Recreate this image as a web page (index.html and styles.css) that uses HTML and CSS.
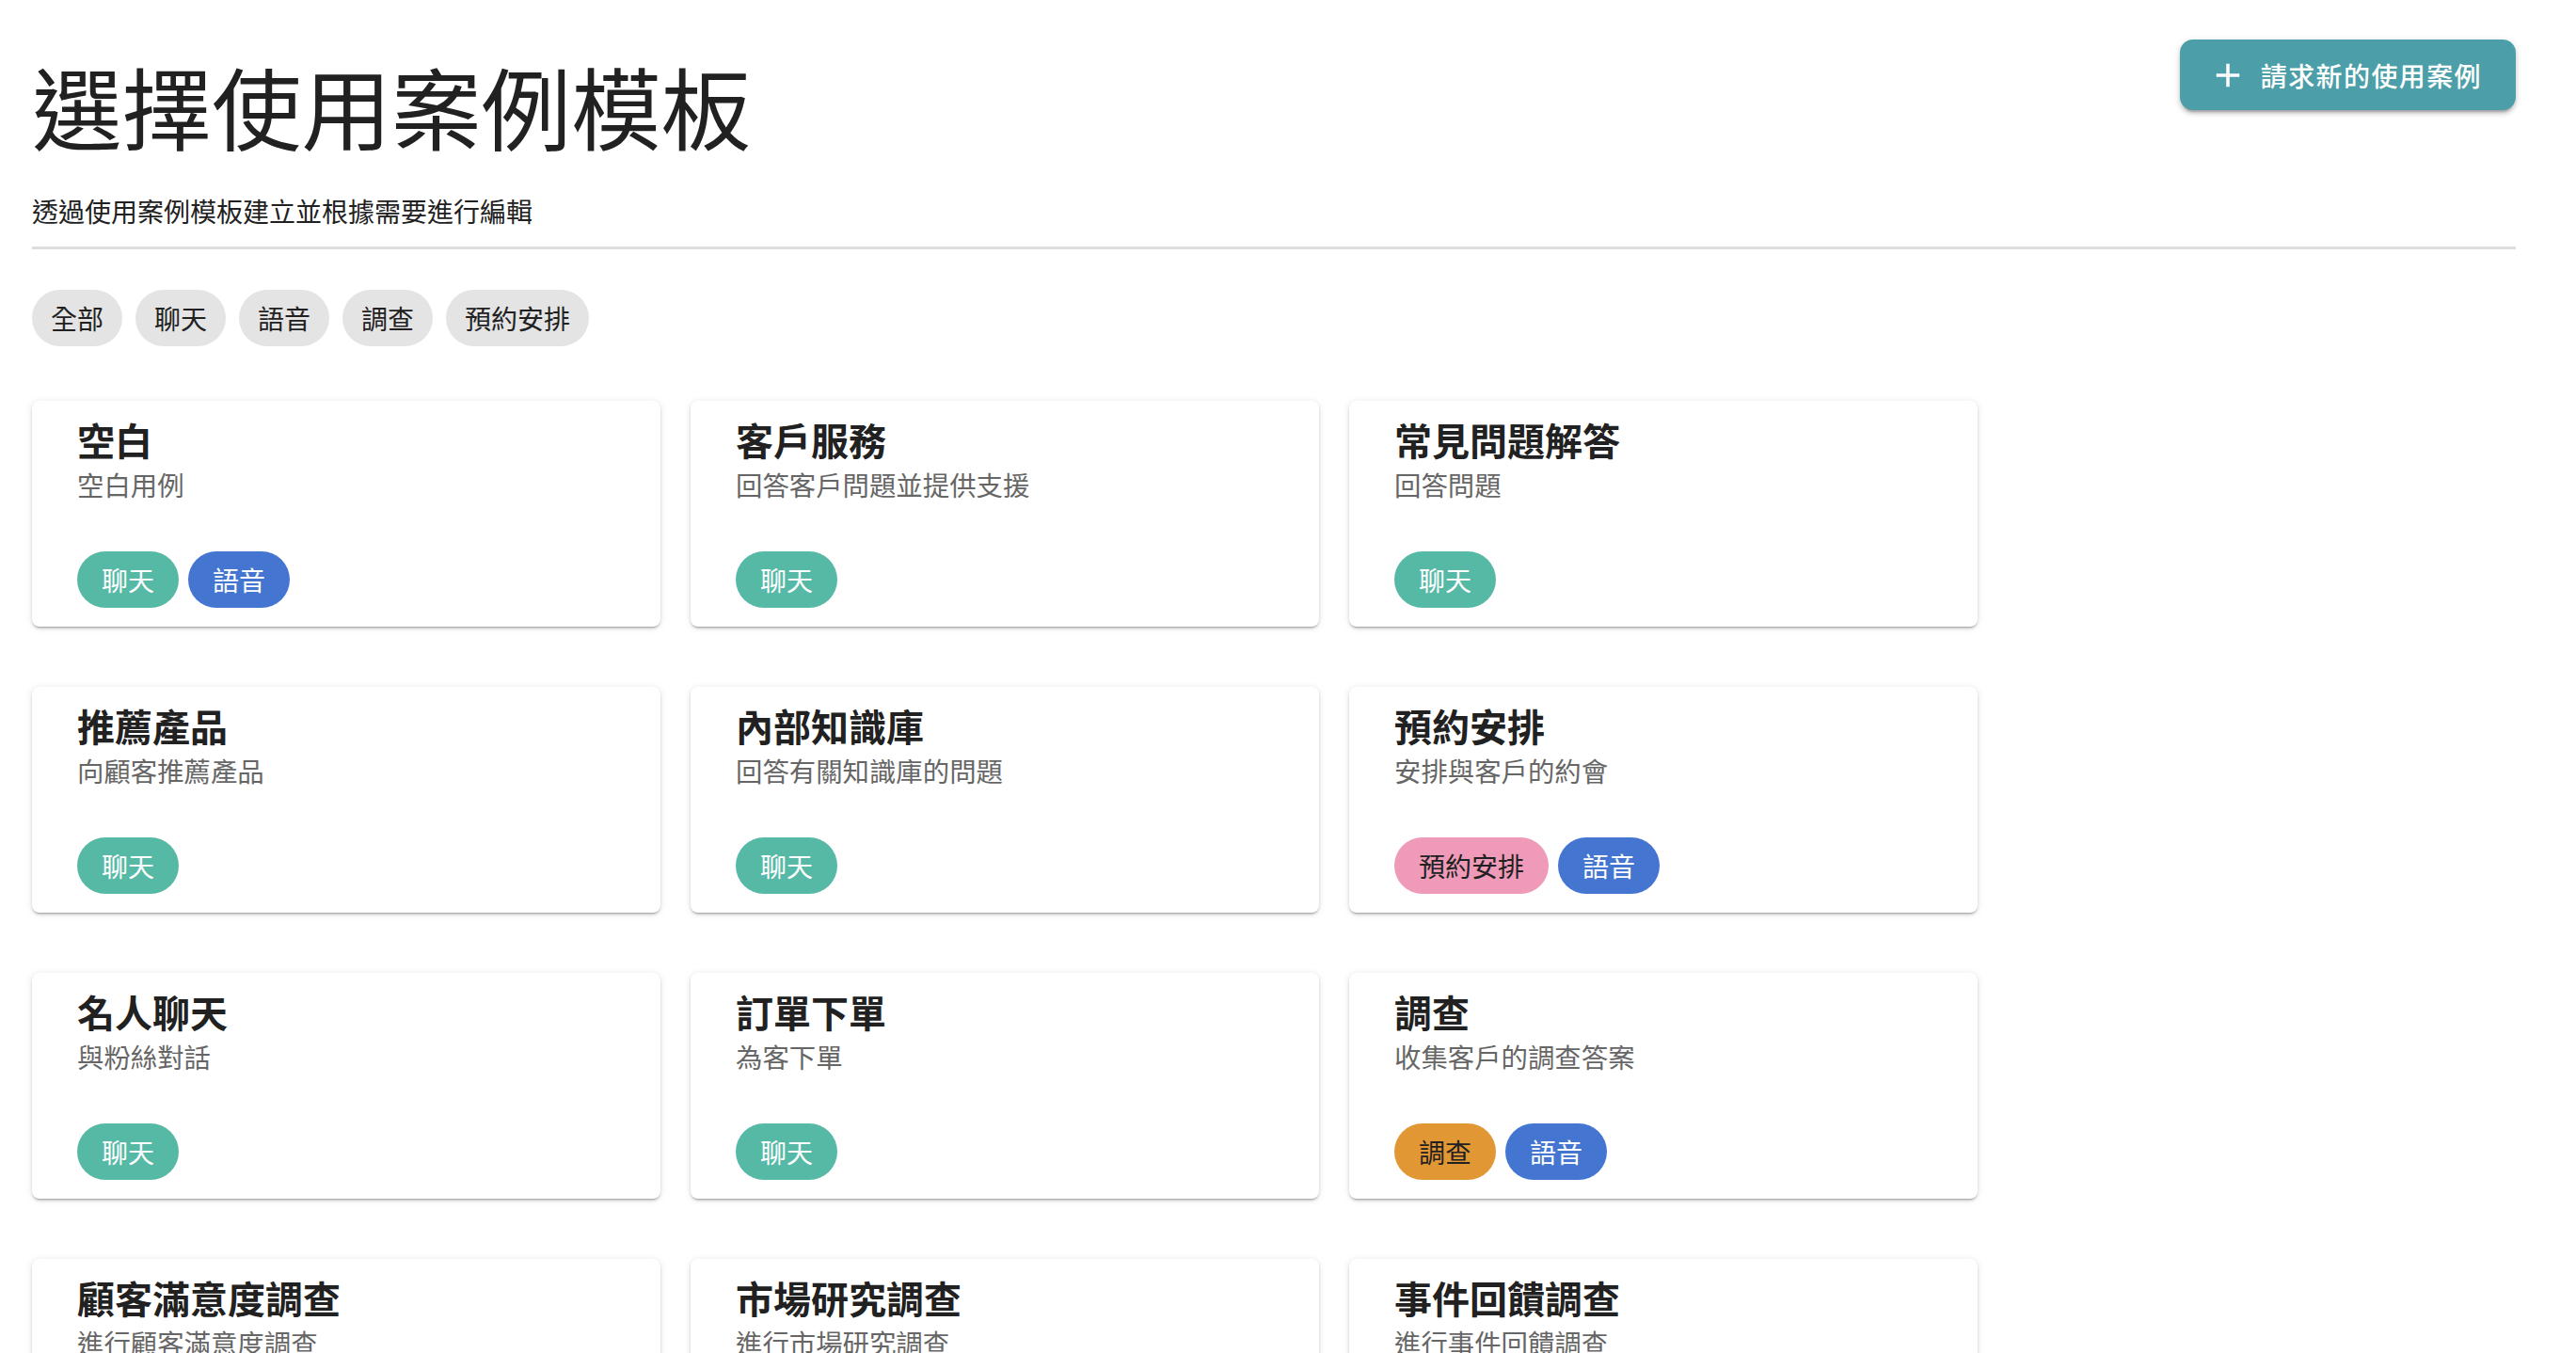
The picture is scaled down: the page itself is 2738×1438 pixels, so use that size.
FILE: index.html
```html
<!DOCTYPE html>
<html lang="zh-Hant">
<head>
<meta charset="utf-8">
<title>選擇使用案例模板</title>
<link rel="stylesheet" href="styles.css">
</head>
<body>
<main class="page">
  <header class="header">
    <div class="header-text">
      <h1 class="title">選擇使用案例模板</h1>
      <p class="subtitle">透過使用案例模板建立並根據需要進行編輯</p>
    </div>
    <button class="request-btn" type="button">
      <svg class="plus" viewBox="0 0 24 24" aria-hidden="true"><path d="M19 13h-6v6h-2v-6H5v-2h6V5h2v6h6v2z"/></svg>
      <span>請求新的使用案例</span>
    </button>
  </header>
  <hr class="divider">
  <nav class="filters">
    <span class="chip">全部</span>
    <span class="chip">聊天</span>
    <span class="chip">語音</span>
    <span class="chip">調查</span>
    <span class="chip">預約安排</span>
  </nav>
  <section class="grid">
    <article class="card">
      <h2 class="card-title">空白</h2>
      <p class="card-desc">空白用例</p>
      <div class="tags"><span class="tag tag-chat">聊天</span><span class="tag tag-voice">語音</span></div>
    </article>
    <article class="card">
      <h2 class="card-title">客戶服務</h2>
      <p class="card-desc">回答客戶問題並提供支援</p>
      <div class="tags"><span class="tag tag-chat">聊天</span></div>
    </article>
    <article class="card">
      <h2 class="card-title">常見問題解答</h2>
      <p class="card-desc">回答問題</p>
      <div class="tags"><span class="tag tag-chat">聊天</span></div>
    </article>
    <article class="card">
      <h2 class="card-title">推薦產品</h2>
      <p class="card-desc">向顧客推薦產品</p>
      <div class="tags"><span class="tag tag-chat">聊天</span></div>
    </article>
    <article class="card">
      <h2 class="card-title">內部知識庫</h2>
      <p class="card-desc">回答有關知識庫的問題</p>
      <div class="tags"><span class="tag tag-chat">聊天</span></div>
    </article>
    <article class="card">
      <h2 class="card-title">預約安排</h2>
      <p class="card-desc">安排與客戶的約會</p>
      <div class="tags"><span class="tag tag-booking">預約安排</span><span class="tag tag-voice">語音</span></div>
    </article>
    <article class="card">
      <h2 class="card-title">名人聊天</h2>
      <p class="card-desc">與粉絲對話</p>
      <div class="tags"><span class="tag tag-chat">聊天</span></div>
    </article>
    <article class="card">
      <h2 class="card-title">訂單下單</h2>
      <p class="card-desc">為客下單</p>
      <div class="tags"><span class="tag tag-chat">聊天</span></div>
    </article>
    <article class="card">
      <h2 class="card-title">調查</h2>
      <p class="card-desc">收集客戶的調查答案</p>
      <div class="tags"><span class="tag tag-survey">調查</span><span class="tag tag-voice">語音</span></div>
    </article>
    <article class="card">
      <h2 class="card-title">顧客滿意度調查</h2>
      <p class="card-desc">進行顧客滿意度調查</p>
      <div class="tags"><span class="tag tag-survey">調查</span><span class="tag tag-voice">語音</span></div>
    </article>
    <article class="card">
      <h2 class="card-title">市場研究調查</h2>
      <p class="card-desc">進行市場研究調查</p>
      <div class="tags"><span class="tag tag-survey">調查</span><span class="tag tag-voice">語音</span></div>
    </article>
    <article class="card">
      <h2 class="card-title">事件回饋調查</h2>
      <p class="card-desc">進行事件回饋調查</p>
      <div class="tags"><span class="tag tag-survey">調查</span><span class="tag tag-voice">語音</span></div>
    </article>
  </section>
</main>
</body>
</html>
```
FILE: styles.css
```css
* { box-sizing: border-box; }

html, body {
  margin: 0;
  background: #ffffff;
}

body {
  font-family: "Noto Sans CJK TC", "Noto Sans", sans-serif;
  color: #212121;
}

.page {
  padding: 42px 64px 60px 34px;
}

.header {
  display: flex;
  justify-content: space-between;
  align-items: flex-start;
}

.title {
  margin: 12px 0 0;
  font-size: 95.5px;
  line-height: 116px;
  font-weight: 400;
  color: #212121;
}

.subtitle {
  margin: 33px 0 0;
  font-size: 28px;
  line-height: 42px;
  color: #212121;
}

.request-btn {
  display: flex;
  align-items: center;
  gap: 14px;
  height: 75px;
  padding: 0 36px 0 30px;
  border: none;
  border-radius: 14px;
  background: #4c9fa8;
  color: #ffffff;
  font-family: inherit;
  font-size: 28px;
  font-weight: 500;
  letter-spacing: 1.4px;
  box-shadow: 0 5px 2px -3px rgba(0,0,0,0.2), 0 4px 4px 0 rgba(0,0,0,0.14), 0 2px 9px 0 rgba(0,0,0,0.12);
  cursor: pointer;
}

.plus {
  width: 42px;
  height: 42px;
  fill: #ffffff;
}

.divider {
  margin: 17px 0 0;
  border: none;
  height: 3px;
  background: #dedede;
}

.filters {
  display: flex;
  gap: 14px;
  margin-top: 43px;
}

.chip {
  display: inline-flex;
  align-items: center;
  height: 60px;
  padding: 0 20px;
  border-radius: 30px;
  background: #e4e4e4;
  color: #212121;
  font-size: 28px;
}

.grid {
  display: grid;
  grid-template-columns: repeat(3, 668px);
  column-gap: 32px;
  row-gap: 64px;
  margin-top: 58px;
}

.card {
  display: flex;
  flex-direction: column;
  height: 240px;
  padding: 17px 48px 20px;
  background: #ffffff;
  border-radius: 8px;
  box-shadow: 0 3px 2px -2px rgba(0,0,0,0.22), 0 2px 3px 0 rgba(0,0,0,0.14), 0 1px 8px 0 rgba(0,0,0,0.10);
}

.card-title {
  margin: 0;
  font-size: 40px;
  line-height: 48px;
  font-weight: 600;
  color: #212121;
}

.card-desc {
  margin: 3px 0 0;
  font-size: 28.4px;
  line-height: 42px;
  color: #666666;
}

.tags {
  display: flex;
  gap: 10px;
  margin-top: auto;
}

.tag {
  display: inline-flex;
  align-items: center;
  height: 60px;
  padding: 0 26px;
  border-radius: 30px;
  font-size: 28px;
  color: #ffffff;
}

.tag-chat { background: #56b9a6; }
.tag-voice { background: #4475d1; }
.tag-booking { background: #ef9ab8; color: #212121; }
.tag-survey { background: #e19734; color: #212121; }
```
